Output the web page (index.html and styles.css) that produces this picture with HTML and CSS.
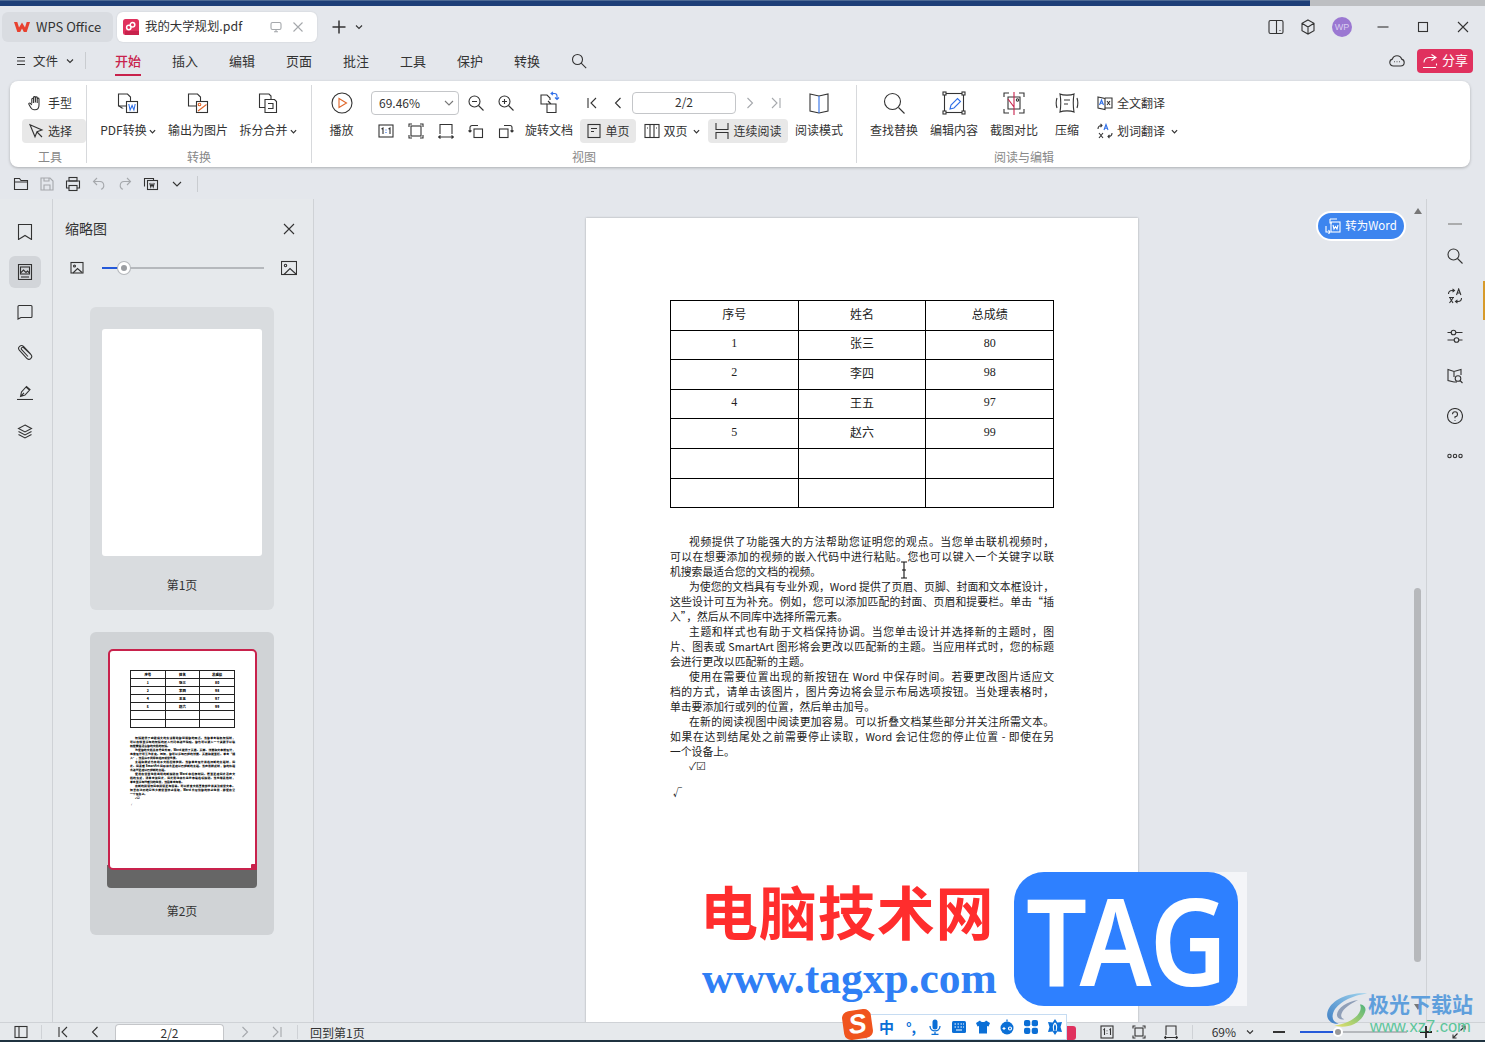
FILE: index.html
```html
<!DOCTYPE html>
<html lang="zh">
<head>
<meta charset="utf-8">
<title>我的大学规划.pdf</title>
<link rel="stylesheet" href="styles.css">
</head>
<body>
<div class="desk-strip"><div class="desk-blue"></div></div>

<header class="tabbar">
  <div class="tab tab-home">
    <svg class="ic16 logo-w" viewBox="0 0 16 16"><path d="M0 3h3.300l1.700 5.500L8 3.500l3 5L12.700 3H16l-3.300 10h-2.900L8 9.500 6.200 13H3.300z" fill="#e8412f" stroke="none"/></svg>
    <span>WPS Office</span>
  </div>
  <div class="tab tab-doc">
    <svg class="ic16" viewBox="0 0 16 16"><rect width="16" height="16" rx="2.500" fill="#e0315e" stroke="none"/><rect x="2" y="12" width="14" height="4" fill="#c8224c" stroke="none"/><circle cx="9.500" cy="5.800" r="2.300" fill="none" stroke="#fff" stroke-width="1.500"/><circle cx="5.800" cy="8.500" r="2.200" fill="none" stroke="#fff" stroke-width="1.500"/></svg>
    <span class="tab-title">我的大学规划.pdf</span>
    <svg class="ic12 gray" viewBox="0 0 12 12"><rect x="1" y="1.500" width="10" height="7" rx="1.500"/><path d="M4 10.800h4M6 8.500v2.300"/></svg>
    <svg class="ic12 gray" viewBox="0 0 12 12"><path d="M1.500 1.500l9 9M10.500 1.500l-9 9"/></svg>
  </div>
  <div class="tab-add">
    <svg class="ic16 dark" viewBox="0 0 16 16"><path d="M1.500 8h13M8 1.500v13" stroke-width="1.500"/></svg>
    <svg class="chev" viewBox="0 0 8 8"><path d="M1 2.500l3 3 3-3"/></svg>
  </div>
  <div class="win-tools">
    <svg class="ic16" viewBox="0 0 16 16"><rect x="1" y="1.500" width="14" height="13" rx="1.500"/><path d="M8.500 1.500v13M11.500 11.500h1"/></svg>
    <svg class="ic16" viewBox="0 0 16 16"><path d="M8 1l6 3.300v7.400L8 15l-6-3.300V4.300zM2 4.300L8 8l6-3.700M8 8v7"/></svg>
    <div class="avatar">WP</div>
    <div class="win-btns">
      <svg class="ic12" viewBox="0 0 12 12"><path d="M0.500 6h11"/></svg>
      <svg class="ic12" viewBox="0 0 12 12"><rect x="1.500" y="1.500" width="9" height="9"/></svg>
      <svg class="ic12" viewBox="0 0 12 12"><path d="M1 1l10 10M11 1L1 11"/></svg>
    </div>
  </div>
</header>

<nav class="menubar">
  <div class="file-menu">
    <svg class="ic12" viewBox="0 0 12 12"><path d="M2 2.500h8M2 6h8M2 9.500h8"/></svg>
    <span>文件</span>
    <svg class="chev" viewBox="0 0 8 8"><path d="M1 2.500l3 3 3-3"/></svg>
  </div>
  <div class="menu-sep"></div>
  <ul class="menu-list">
    <li class="on">开始</li><li>插入</li><li>编辑</li><li>页面</li><li>批注</li><li>工具</li><li>保护</li><li>转换</li>
  </ul>
  <svg class="ic16 menu-search" viewBox="0 0 16 16"><circle cx="6.500" cy="6.500" r="5"/><path d="M10.200 10.200l5 5"/></svg>
  <div class="menu-right">
    <svg class="ic16" viewBox="0 0 16 16"><path d="M4.500 13C2.300 13 .8 11.500.8 9.500c0-1.700 1-3 2.600-3.400C4 4 5.800 2.800 8 2.800s4 1.200 4.600 3.300c1.600.4 2.600 1.700 2.600 3.400 0 2-1.500 3.500-3.700 3.500z"/><path d="M5 8.800h.8M7.600 8.800h.8M10.200 8.800h.8"/></svg>
    <div class="share">
      <svg class="ic16 white" viewBox="0 0 16 16"><path d="M9.500 1.500l4.500 3-4.500 3M14 4.500H7C4 4.500 2 6.500 2 9.500M1 14.500h13M14.500 10.500v2"/></svg>
      <span>分享</span>
    </div>
  </div>
</nav>

<section class="ribbon">
  <div class="group g-tool">
    <div class="group-body col">
      <div class="row-btn"><svg class="ic16" viewBox="0 0 16 16"><path d="M3.800 8.500V4.200a.9.900 0 0 1 1.800 0V8M5.600 7.500V2.500a.9.900 0 0 1 1.800 0V7.500M7.400 7.500V2.800a.9.900 0 0 1 1.800 0V8M9.200 8V4a.9.900 0 0 1 1.800 0v6c0 3-1.700 4.800-4 4.800H6c-1.500 0-2.500-.7-3.300-2.200L.9 9.300c-.5-1 .8-1.800 1.500-1L3.800 10"/></svg><span>手型</span></div>
      <div class="row-btn sel"><svg class="ic16" viewBox="0 0 16 16"><path d="M2 1.800l12 5.200-5 1.800-2 5z"/><path d="M9 9l5 5"/></svg><span>选择</span></div>
    </div>
    <div class="group-label">工具</div>
  </div>

  <div class="group g-convert">
    <div class="group-body">
      <div class="big w70"><svg class="ic24" viewBox="0 0 24 24"><path d="M11 15H2.500V3h9l3 3v4"/><path d="M3 15l3 2-1 0"/><rect x="10.500" y="10.500" width="11" height="11" fill="#fff"/><path d="M12.800 13l1.300 6 2-4.500 1.800 4.500 1.300-6" stroke="#2f6fe8"/></svg><span class="lbl">PDF转换<svg class="chev-s" viewBox="0 0 8 8"><path d="M1 2.500l3 3 3-3"/></svg></span></div>
      <div class="big w70"><svg class="ic24" viewBox="0 0 24 24"><path d="M11 15H2.500V3h9l3 3v4"/><rect x="10.500" y="10.500" width="11" height="11" fill="#fff"/><circle cx="13.500" cy="13.500" r="1.300" stroke="#e0662a"/><path d="M12 20l8.500-6.500" stroke="#e0662a"/></svg><span class="lbl">输出为图片</span></div>
      <div class="big w70"><svg class="ic24" viewBox="0 0 24 24"><path d="M9 16.500H3.500V3H13l2 2v3"/><path d="M9 8.500h9.500l2 2v11H9zM12 12.500h5v5h-5"/></svg><span class="lbl">拆分合并<svg class="chev-s" viewBox="0 0 8 8"><path d="M1 2.500l3 3 3-3"/></svg></span></div>
    </div>
    <div class="group-label">转换</div>
  </div>

  <div class="group g-view">
    <div class="group-body">
      <div class="big w59"><svg class="ic24" viewBox="0 0 24 24"><circle cx="12" cy="12" r="10"/><path d="M9 7.500l7.500 4.500L9 16.500z" stroke="#e0662a"/></svg><span class="lbl">播放</span></div>
      <div class="col w150">
        <div class="row">
          <div class="combo"><span>69.46%</span><svg class="chev-m" viewBox="0 0 10 10"><path d="M1 3l4 4 4-4"/></svg></div>
          <svg class="ic16 mi9" viewBox="0 0 16 16"><circle cx="6.500" cy="6.500" r="5.500"/><path d="M10.500 10.500l5 5M4 6.500h5"/></svg>
          <svg class="ic16 mi14" viewBox="0 0 16 16"><circle cx="6.500" cy="6.500" r="5.500"/><path d="M10.500 10.500l5 5M4 6.500h5M6.500 4v5"/></svg>
        </div>
        <div class="row icons30">
          <svg class="ic16" viewBox="0 0 16 16"><rect x="1" y="2" width="14" height="12"/><path d="M3.500 6l1.500-1v6M10.500 6l1.500-1v6"/><path d="M8 6.500v1M8 9v1" stroke="#2f6fe8"/></svg>
          <svg class="ic16" viewBox="0 0 16 16"><rect x="3" y="3" width="10" height="10"/><path d="M1 4V1h3M12 1h3v3M15 12v3h-3M4 15H1v-3"/></svg>
          <svg class="ic16" viewBox="0 0 16 16"><path d="M2 11V1.500h12V11M.5 14h15M2.500 12.500L.5 14l2 1.500M13.500 12.500l2 1.500-2 1.500"/></svg>
          <svg class="ic16" viewBox="0 0 16 16"><rect x="6" y="6" width="8.500" height="8.500"/><path d="M2 9V4.500a2 2 0 0 1 2-2h6M.5 7.500L2 9l1.500-1.500"/></svg>
          <svg class="ic16" viewBox="0 0 16 16"><rect x="1.500" y="6" width="8.500" height="8.500"/><path d="M14 9V4.500a2 2 0 0 0-2-2H6M15.500 7.500L14 9l-1.500-1.500"/></svg>
        </div>
      </div>
      <div class="big w56"><svg class="ic24" viewBox="0 0 24 24"><path d="M10 13H4V4h6l3 3v2"/><path d="M10 13h9v8.500H10zM11 10l3 3"/><path d="M14 2.500h3.500a2.500 2.500 0 0 1 2.500 2.500v3M18 6.500l2 2 2-2M16 .8l-2 1.700 2 1.700" stroke="#2f6fe8"/></svg><span class="lbl">旋转文档</span></div>
      <div class="col w215">
        <div class="row nav-row">
          <svg class="ic12 mi9" viewBox="0 0 12 12"><path d="M2 1v10M10 1L5 6l5 5"/></svg>
          <svg class="ic12 mi14" viewBox="0 0 12 12"><path d="M8.500 1L3.500 6l5 5"/></svg>
          <div class="page-input">2/2</div>
          <svg class="ic12 gray mi8" viewBox="0 0 12 12"><path d="M3.500 1l5 5-5 5"/></svg>
          <svg class="ic12 gray mi14" viewBox="0 0 12 12"><path d="M10 1v10M2 1l5 5-5 5"/></svg>
        </div>
        <div class="row view-row">
          <div class="mode sel w56"><svg class="ic16" viewBox="0 0 16 16"><rect x="2" y="1.500" width="12" height="13"/><path d="M5 5.500h6M5 8.500h3"/></svg><span>单页</span></div>
          <div class="mode w56"><svg class="ic16" viewBox="0 0 16 16"><rect x="1" y="1.500" width="14" height="13"/><path d="M6 1.500v13M10 1.500v13M3 5h1M12 5h1"/></svg><span>双页</span><svg class="chev-s" viewBox="0 0 8 8"><path d="M1 2.500l3 3 3-3"/></svg></div>
          <div class="mode sel w80"><svg class="ic16" viewBox="0 0 16 16"><path d="M2 0v6.500h12V0M2 16V9.500h12V16"/></svg><span>连续阅读</span></div>
        </div>
      </div>
      <div class="big w54"><svg class="ic24" viewBox="0 0 24 24"><path d="M3 3l9 2 9-2v17l-9 2-9-2z"/><path d="M12 5v17" stroke="#2f6fe8"/></svg><span class="lbl">阅读模式</span></div>
    </div>
    <div class="group-label">视图</div>
  </div>

  <div class="group g-read">
    <div class="group-body">
      <div class="big w60"><svg class="ic24" viewBox="0 0 24 24"><circle cx="10.500" cy="10.500" r="8"/><path d="M16.500 16.500l6 6"/></svg><span class="lbl">查找替换</span></div>
      <div class="big w60"><svg class="ic24" viewBox="0 0 24 24"><rect x="2.500" y="2.500" width="19" height="19"/><rect x="1" y="1" width="3" height="3" fill="#fff"/><rect x="20" y="1" width="3" height="3" fill="#fff"/><rect x="1" y="20" width="3" height="3" fill="#fff"/><rect x="20" y="20" width="3" height="3" fill="#fff"/><path d="M8 18l1-4 6.500-6.500 3 3L12 17z" stroke="#2f6fe8"/></svg><span class="lbl">编辑内容</span></div>
      <div class="big w60"><svg class="ic24" viewBox="0 0 24 24"><path d="M2 6V2h5M22 6V2h-5M2 18v4h5M22 18v4h-5"/><path d="M6 6h12v12H6z"/><path d="M12 1v23M6 8l6 8" stroke="#c8224c"/><circle cx="15.500" cy="9" r="1.200"/></svg><span class="lbl">截图对比</span></div>
      <div class="big w46"><svg class="ic24" viewBox="0 0 24 24"><path d="M5 3c3 1.500 11 1.500 14 0-1 6-1 12 0 18-3-1.500-11-1.500-14 0 1-6 1-12 0-18zM9 9h6M9 13h4M2 7c-1 3-1 7 0 10M22 7c1 3 1 7 0 10"/></svg><span class="lbl">压缩</span></div>
      <div class="col trans">
        <div class="row-btn"><svg class="ic16" viewBox="0 0 16 16"><path d="M1 2l7 1.500v11L1 13z"/><path d="M8 3h7v10H8"/><path d="M2.500 10l2-5 2 5M3.300 8.300h2.400" stroke="#2f6fe8"/><path d="M10 6l3 4M13 6l-3 4"/></svg><span>全文翻译</span></div>
        <div class="row-btn"><svg class="ic16" viewBox="0 0 16 16"><path d="M1 6c0-2 1.500-3.500 3.500-3.500M3.500.8l1.500 1.700-1.500 1.700M15 10c0 2-1.500 3.500-3.500 3.500M12.500 11.800L11 13.500l1.500 1.700"/><path d="M7 7l2-5.500L11 7M7.800 5.200h2.400" stroke="#2f6fe8"/><path d="M2 10l4 5M6 10l-4 5"/></svg><span>划词翻译</span><svg class="chev-s" viewBox="0 0 8 8"><path d="M1 2.500l3 3 3-3"/></svg></div>
      </div>
    </div>
    <div class="group-label shift">阅读与编辑</div>
  </div>
</section>

<div class="quickbar">
  <svg class="ic16" viewBox="0 0 16 16"><path d="M1.500 13.500V2.500h5l1.500 2h6.500v9zM1.500 6h13"/></svg>
  <svg class="ic16 gray" viewBox="0 0 16 16"><path d="M2 2h9l3 3v9H2zM5 2v3h5V2M5 14V9h6v5"/></svg>
  <svg class="ic16" viewBox="0 0 16 16"><rect x="4" y="1.500" width="8" height="3.500"/><path d="M4 12H1.500V5h13v7H12"/><rect x="4" y="9.500" width="8" height="5"/></svg>
  <svg class="ic16 gray" viewBox="0 0 16 16"><path d="M6 2L2.500 5.500 6 9M3 5.500h6a4 4 0 0 1 1 7.800"/></svg>
  <svg class="ic16 gray" viewBox="0 0 16 16"><path d="M10 2l3.500 3.500L10 9M13 5.500H7a4 4 0 0 0-1 7.800"/></svg>
  <svg class="ic16" viewBox="0 0 16 16"><path d="M1.500 10.500v-8h9v2"/><rect x="4.500" y="4.500" width="10" height="9"/><path d="M6.800 7l1 4 1.200-3 1.200 3 1-4"/></svg>
  <svg class="chev-l" viewBox="0 0 10 10"><path d="M1 3l4 4 4-4"/></svg>
  <div class="quick-sep"></div>
</div>

<main class="main">
  <aside class="rail">
    <div class="rail-btn"><svg class="ic16" viewBox="0 0 16 16"><path d="M1.500 0.500h13v15L8 11.500l-6.500 4z"/></svg></div>
    <div class="rail-btn sel"><svg class="ic16" viewBox="0 0 16 16"><rect x="1.500" y="0.500" width="13" height="15"/><rect x="3.500" y="3" width="9" height="7"/><path d="M3.500 9l3-3 2.500 2.500 1.500-1.500 2 2"/><path d="M4 13h8"/></svg></div>
    <div class="rail-btn"><svg class="ic16" viewBox="0 0 16 16"><path d="M1 2.500a1 1 0 0 1 1-1h12a1 1 0 0 1 1 1v10a1 1 0 0 1-1 1H4L1 15z"/></svg></div>
    <div class="rail-btn"><svg class="ic16" viewBox="0 0 16 16"><path d="M13.500 10L6.500 2.500a2.800 2.800 0 0 0-4.200 3.700l7.500 8.200a2.800 2.800 0 0 0 4.200-3.700L6.800 3.800a1.400 1.400 0 0 0-2.100 1.900L11 12.500"/></svg></div>
    <div class="rail-btn"><svg class="ic16" viewBox="0 0 16 16"><path d="M0 15.500h16"/><path d="M3.500 12.500l1-4.500 5-5.500 3.500 3-5 5.500zM9 3l3.500 3M3.500 12.500L7 8.800"/></svg></div>
    <div class="rail-btn"><svg class="ic16" viewBox="0 0 16 16"><path d="M8 1l6.500 3.500L8 8 1.500 4.500zM1.500 7.500L8 11l6.500-3.500M1.500 10.500L8 14l6.500-3.500"/></svg></div>
  </aside>

  <aside class="panel">
    <div class="panel-head"><span>缩略图</span><svg class="ic12" viewBox="0 0 12 12"><path d="M1 1l10 10M11 1L1 11"/></svg></div>
    <div class="zoom-row">
      <svg class="ic14" viewBox="0 0 14 14"><rect x="1" y="1.500" width="12" height="10.500"/><circle cx="4.500" cy="5" r="1"/><path d="M3 12l4.500-4.500 4.500 4"/></svg>
      <div class="slider"><div class="slider-on"></div><div class="slider-knob"></div><div class="slider-off"></div></div>
      <svg class="ic16" viewBox="0 0 16 16"><rect x="0.500" y="1.500" width="15" height="13"/><circle cx="4.500" cy="5.500" r="1.200"/><path d="M3 14.500l6-6 6 5.500"/></svg>
    </div>
    <div class="thumb">
      <div class="thumb-blank"></div>
      <div class="thumb-name">第1页</div>
    </div>
    <div class="thumb active">
      <div class="mini">
        <div class="mini-page">
          <table class="mini-table">
            <tr><td>序号</td><td>姓名</td><td>总成绩</td></tr>
            <tr><td>1</td><td>张三</td><td>80</td></tr>
            <tr><td>2</td><td>李四</td><td>98</td></tr>
            <tr><td>4</td><td>王五</td><td>97</td></tr>
            <tr><td>5</td><td>赵六</td><td>99</td></tr>
            <tr><td></td><td></td><td></td></tr>
            <tr><td></td><td></td><td></td></tr>
          </table>
          <div class="mini-text">
            <p class="ln in">视频提供了功能强大的方法帮助您证明您的观点。当您单击联机视频时，</p>
            <p class="ln">可以在想要添加的视频的嵌入代码中进行粘贴。您也可以键入一个关键字以联</p>
            <p class="ln end">机搜索最适合您的文档的视频。</p>
            <p class="ln in">为使您的文档具有专业外观，Word 提供了页眉、页脚、封面和文本框设计，</p>
            <p class="ln">这些设计可互为补充。例如，您可以添加匹配的封面、页眉和提要栏。单击“插</p>
            <p class="ln end">入”，然后从不同库中选择所需元素。</p>
            <p class="ln in">主题和样式也有助于文档保持协调。当您单击设计并选择新的主题时，图</p>
            <p class="ln">片、图表或 SmartArt 图形将会更改以匹配新的主题。当应用样式时，您的标题</p>
            <p class="ln end">会进行更改以匹配新的主题。</p>
            <p class="ln in">使用在需要位置出现的新按钮在 Word 中保存时间。若要更改图片适应文</p>
            <p class="ln">档的方式，请单击该图片，图片旁边将会显示布局选项按钮。当处理表格时，</p>
            <p class="ln end">单击要添加行或列的位置，然后单击加号。</p>
            <p class="ln in">在新的阅读视图中阅读更加容易。可以折叠文档某些部分并关注所需文本。</p>
            <p class="ln">如果在达到结尾处之前需要停止读取，Word 会记住您的停止位置 - 即使在另</p>
            <p class="ln end">一个设备上。</p>
            <p class="ln end in">✓☑</p>
            <p class="ln end mini-v">√</p>
          </div>
          <div class="mini-corner"></div>
        </div>
        <div class="mini-shadow"></div>
      </div>
      <div class="thumb-name">第2页</div>
    </div>
  </aside>

  <section class="doc">
    <div class="doc-view">
      <article class="page">
        <table class="score">
          <tr><td>序号</td><td>姓名</td><td>总成绩</td></tr>
          <tr><td>1</td><td>张三</td><td>80</td></tr>
          <tr><td>2</td><td>李四</td><td>98</td></tr>
          <tr><td>4</td><td>王五</td><td>97</td></tr>
          <tr><td>5</td><td>赵六</td><td>99</td></tr>
          <tr><td></td><td></td><td></td></tr>
          <tr><td></td><td></td><td></td></tr>
        </table>
        <div class="body-text">
          <p class="ln in">视频提供了功能强大的方法帮助您证明您的观点。当您单击联机视频时，</p>
          <p class="ln">可以在想要添加的视频的嵌入代码中进行粘贴。您也可以键入一个关键字以联</p>
          <p class="ln end">机搜索最适合您的文档的视频。</p>
          <p class="ln in">为使您的文档具有专业外观，Word 提供了页眉、页脚、封面和文本框设计，</p>
          <p class="ln">这些设计可互为补充。例如，您可以添加匹配的封面、页眉和提要栏。单击“插</p>
          <p class="ln end">入”，然后从不同库中选择所需元素。</p>
          <p class="ln in">主题和样式也有助于文档保持协调。当您单击设计并选择新的主题时，图</p>
          <p class="ln">片、图表或 SmartArt 图形将会更改以匹配新的主题。当应用样式时，您的标题</p>
          <p class="ln end">会进行更改以匹配新的主题。</p>
          <p class="ln in">使用在需要位置出现的新按钮在 Word 中保存时间。若要更改图片适应文</p>
          <p class="ln">档的方式，请单击该图片，图片旁边将会显示布局选项按钮。当处理表格时，</p>
          <p class="ln end">单击要添加行或列的位置，然后单击加号。</p>
          <p class="ln in">在新的阅读视图中阅读更加容易。可以折叠文档某些部分并关注所需文本。</p>
          <p class="ln">如果在达到结尾处之前需要停止读取，Word 会记住您的停止位置 - 即使在另</p>
          <p class="ln end">一个设备上。</p>
          <p class="ln end in checks">✓☑</p>
          <p class="ln end root">√</p>
        </div>
        <svg class="ibeam" viewBox="0 0 8 18"><path d="M1 1h6M4 1v16M1 17h6M2 9h4"/></svg>
      </article>
    </div>
    <div class="scroll">
      <svg class="scroll-up" viewBox="0 0 8 6"><path d="M4 0l4 6H0z"/></svg>
      <div class="scroll-thumb"></div>
      <svg class="scroll-down" viewBox="0 0 8 6"><path d="M0 0h8L4 6z"/></svg>
    </div>
    <div class="to-word">
      <svg class="ic16 white" viewBox="0 0 16 16"><path d="M5 1h7M5 1v4h2"/><rect x="6" y="4" width="9" height="10"/><path d="M8 7l1 4 1.500-2.500L12 11l1-4"/><path d="M1 8v6h4M3.500 12L5 14l-1.500 2"/></svg>
      <span>转为Word</span>
    </div>
  </section>

  <aside class="side-tools">
    <div class="side-btn"><svg class="ic16 gray2" viewBox="0 0 16 16"><path d="M1 8h14" stroke-width="1.500"/></svg></div>
    <div class="side-btn"><svg class="ic16" viewBox="0 0 16 16"><circle cx="6.500" cy="6.500" r="5.500"/><path d="M10.500 10.500l5 5"/></svg></div>
    <div class="side-btn"><svg class="ic16" viewBox="0 0 16 16"><path d="M1.500 6c0-2 1.500-3.500 3.500-3.500h2M5.500.8L7.500 2.500 5.500 4.200M14.500 10c0 2-1.500 3.500-3.500 3.500H9M10.500 11.800L8.500 13.500l2 1.700"/><path d="M9.500 7l2.200-6 2.200 6M10.300 5h2.800"/><path d="M2 9.500h5M2.500 15l3.500-5M6 15l-3-5"/></svg></div>
    <div class="side-btn"><svg class="ic16" viewBox="0 0 16 16"><path d="M0.500 4.500h4M9 4.500h6.500M7 12h-6.500M11.500 12h4"/><circle cx="6.500" cy="4.500" r="2.300"/><circle cx="9.500" cy="12" r="2.300"/></svg></div>
    <div class="side-btn"><svg class="ic16" viewBox="0 0 16 16"><path d="M7 14L1 12.500V1.500L7 3.500l7-2v5.500M7 3.500V9"/><circle cx="11" cy="10.500" r="2.800"/><path d="M13 12.500l2.500 2.500M7 14h3"/></svg></div>
    <div class="side-btn"><svg class="ic16" viewBox="0 0 16 16"><circle cx="8" cy="8" r="7.500"/><path d="M5.500 6.200A2.500 2.500 0 1 1 8 8.800v1.500M8 12v.8"/></svg></div>
    <div class="side-btn"><svg class="ic16" viewBox="0 0 16 16"><circle cx="2.500" cy="8" r="1.700"/><circle cx="8" cy="8" r="1.700"/><circle cx="13.500" cy="8" r="1.700"/></svg></div>
  </aside>
</main>

<footer class="status">
  <svg class="ic14 st-panel" viewBox="0 0 14 14"><rect x="1" y="1.500" width="12" height="11"/><path d="M5 1.500v11"/></svg>
  <div class="st-sep"></div>
  <svg class="ic12 st-first" viewBox="0 0 12 12"><path d="M2 1v10M10 1L5 6l5 5"/></svg>
  <svg class="ic12 st-prev" viewBox="0 0 12 12"><path d="M8.500 1L3.500 6l5 5"/></svg>
  <div class="st-input">2/2</div>
  <svg class="ic12 gray st-next" viewBox="0 0 12 12"><path d="M3.500 1l5 5-5 5"/></svg>
  <svg class="ic12 gray st-last" viewBox="0 0 12 12"><path d="M10 1v10M2 1l5 5-5 5"/></svg>
  <div class="st-sep st-sep2"></div>
  <span class="st-back">回到第1页</span>
  <div class="st-right">
    <svg class="ic14" viewBox="0 0 14 14"><rect x="1" y="1" width="12" height="12"/><path d="M3.500 5l1-1v6M9.500 5l1-1v6M7 5.500v.8M7 8v.8"/></svg>
    <svg class="ic14" viewBox="0 0 14 14"><rect x="3" y="3" width="8" height="8"/><path d="M1 3.500V1h2.500M10.500 1H13v2.500M13 10.500V13h-2.500M3.500 13H1v-2.500"/></svg>
    <svg class="ic14 st-fit" viewBox="0 0 14 14"><path d="M2 10V1h10v9M.5 12.500h13M2 11l-1.500 1.500L2 14M12 11l1.500 1.500L12 14"/></svg>
    <div class="st-sep st-sep3"></div>
    <span class="st-pct">69%</span>
    <svg class="chev st-chev" viewBox="0 0 8 8"><path d="M1 2.500l3 3 3-3"/></svg>
    <div class="st-minus"></div>
    <div class="st-slider"><div class="st-on"></div><div class="st-knob"></div></div>
    <svg class="ic12 st-plus" viewBox="0 0 12 12"><path d="M0 6h12M6 0v12" stroke-width="1.800"/></svg>
    <svg class="ic14 st-expand" viewBox="0 0 14 14"><path d="M8.500 5.500L13 1M9.500 1H13v3.500M5.500 8.500L1 13M4.500 13H1V9.500"/></svg>
  </div>
</footer>
<div class="taskbar"></div>

<div class="edge-mark"></div>

<div class="wm">
  <div class="wm-left">
    <div class="wm-cn">电脑技术网</div>
    <div class="wm-url">www.tagxp.com</div>
  </div>
  <div class="wm-tag"><div class="wm-badge"><span>TAG</span></div></div>
</div>

<div class="xz">
  <svg class="xz-swirl" viewBox="0 0 48 42">
    <defs>
      <linearGradient id="xzBlue" x1="1" y1="0" x2="0" y2="1"><stop offset="0" stop-color="#9fd4ee"/><stop offset="1" stop-color="#3f7fc4"/></linearGradient>
      <linearGradient id="xzGreen" x1="0" y1="1" x2="1" y2="0"><stop offset="0" stop-color="#e8e26a"/><stop offset="1" stop-color="#4fb37a"/></linearGradient>
    </defs>
    <path d="M46 3C30 1 8 8 3 22c-3 9 4 15 12 14-6-2-8-6-6-12C13 13 30 5 46 3z" fill="url(#xzBlue)"/>
    <path d="M36 10C24 12 14 18 13 26c0 4 4 6 8 5-3-1-4-3-3-6 2-6 10-11 18-15z" fill="#8f9fb8"/>
    <path d="M10 38c14 4 30-2 34-16 1-4-2-7-6-7 4 6-4 20-28 23z" fill="url(#xzGreen)"/>
  </svg>
  <div class="xz-text">
    <div class="xz-cn">极光下载站</div>
    <div class="xz-url">www.xz7.com</div>
  </div>
</div>

<div class="ime">
  <div class="ime-s">S</div>
  <div class="ime-bar">
    <span class="ime-cn">中</span>
    <span class="ime-punct">°,</span>
    <svg class="ime-ic" viewBox="0 0 16 16"><rect x="5.500" y="0.500" width="5" height="10" rx="2.500" fill="#0b6fd6"/><path d="M3 7c0 6.500 10 6.500 10 0M8 13v2.500M4.500 15.500h7" fill="none" stroke="#0b6fd6" stroke-width="1.300"/></svg>
    <svg class="ime-ic" viewBox="0 0 16 16"><rect x="1" y="2" width="14" height="12" rx="1.500" fill="#0b6fd6"/><path d="M3.500 5h1.500M6.500 5H8M9.500 5H11M12 5h1M3.500 8h1.500M6.500 8H8M9.500 8H11M12 8h1M5 11h6" stroke="#fff" stroke-width="1.200"/></svg>
    <svg class="ime-ic" viewBox="0 0 16 16"><path d="M5 1.500L1 4l1.500 3.500L4 7v7.500h8V7l1.500.5L15 4l-4-2.500C10 3.500 6 3.500 5 1.500z" fill="#0b6fd6"/></svg>
    <svg class="ime-ic" viewBox="0 0 16 16"><circle cx="8" cy="9" r="6.500" fill="#0b6fd6"/><path d="M8 2.500V.5" stroke="#0b6fd6" stroke-width="1.300"/><path d="M3.500 9.500h3M5 8v3" stroke="#fff" stroke-width="1.100"/><circle cx="11" cy="9.500" r="1.500" fill="none" stroke="#fff" stroke-width="1.100"/></svg>
    <svg class="ime-ic" viewBox="0 0 16 16"><rect x="1" y="1" width="6.300" height="6.300" rx="2" fill="#0b6fd6"/><rect x="8.700" y="1" width="6.300" height="6.300" rx="2" fill="#0b6fd6"/><rect x="1" y="8.700" width="6.300" height="6.300" rx="2" fill="#0b6fd6"/><rect x="8.700" y="8.700" width="6.300" height="6.300" rx="2" fill="#0b6fd6"/></svg>
    <svg class="ime-ic" viewBox="0 0 16 16"><path d="M8 0l2.300 3.500L15 3l-1.500 5L15 13l-4.700-.5L8 16l-2.300-3.500L1 13l1.500-5L1 3l4.700.5z" fill="#0b6fd6"/><path d="M8 4c-2 2-2 5-1 8M8 4c2 2 2 5 1 8" fill="none" stroke="#fff"/></svg>
  </div>
  <div class="ime-red"></div>
</div>
</body>
</html>
```
FILE: styles.css
```css
* { box-sizing: border-box; }
html, body { margin: 0; padding: 0; }
body {
  width: 1485px; height: 1042px; overflow: hidden; position: relative;
  background: #e4e7ec; color: #333;
  font-family: "Noto Sans CJK SC", "Noto Sans", sans-serif; font-size: 12px;
  display: flex; flex-direction: column;
}
svg { display: block; flex: none; fill: none; stroke: currentColor; stroke-width: 1.1; }
.ic12 { width: 12px; height: 12px; }
.ic14 { width: 14px; height: 14px; }
.ic16 { width: 16px; height: 16px; }
.ic24 { width: 24px; height: 24px; }
.gray { color: #a5a8ac; }
.gray2 { color: #999; }
.dark { color: #333; }
.white { color: #fff; }
.chev { width: 8px; height: 8px; }
.chev-s { display: inline-block; width: 7px; height: 7px; margin-left: 2px; vertical-align: 0; stroke-width: 1.4; }
.chev-m { width: 10px; height: 10px; color: #777; }
.chev-l { width: 10px; height: 10px; }

.desk-strip { height: 6px; flex: none; background: #bdbfc2; }
.desk-blue { width: 1310px; height: 6px; background: #1d3f78; border-top: 1px solid #4d6a94; }

/* title bar */
.tabbar { height: 38px; flex: none; display: flex; align-items: center; padding: 6px 16px 2px 2px; }
.tab { height: 30px; border-radius: 6px; display: flex; align-items: center; font-size: 13px; }
.tab > span { margin-bottom: 2px; }
.tab-home { width: 111px; background: #d9dce1; padding-left: 12px; gap: 6px; }
.tab-doc { width: 200px; margin-left: 4px; background: #fff; padding-left: 6px; box-shadow: 0 0 2px rgba(0,0,0,.12); }
.tab-title { margin-left: 6px; width: 125px; font-size: 12.4px; }
.tab-doc .ic12:last-child { margin-left: 10px; }
.tab-add { display: flex; align-items: center; margin-left: 14px; gap: 8px; }
.win-tools { margin-left: auto; display: flex; align-items: center; gap: 16px; }
.avatar { width: 20px; height: 20px; border-radius: 50%; background: #9b78d2; color: #d9cdf0; font: 9px/20px "Liberation Sans", sans-serif; text-align: center; }
.win-btns { display: flex; gap: 28px; margin-left: 9px; }

/* menu */
.menubar { height: 37px; flex: none; display: flex; align-items: center; padding: 0 12px 4px 15px; font-size: 13px; }
.file-menu { display: flex; align-items: center; gap: 6px; width: 62px; font-size: 12.5px; }
.file-menu .chev { margin-left: 2px; }
.menu-sep { width: 1px; height: 17px; background: #c9ccd0; margin-left: 8px; }
.menu-list { list-style: none; margin: 0 0 0 29px; padding: 0; display: flex; gap: 31px; }
.menu-list li { width: 26px; position: relative; white-space: nowrap; line-height: 20px; }
.menu-list li.on { color: #c8224c; font-weight: 500; }
.menu-list li.on::after { content: ""; position: absolute; left: 0; right: 0; bottom: -5px; height: 2px; background: #c8224c; }
.menu-search { margin-left: 31px; }
.menu-right { margin-left: auto; display: flex; align-items: center; gap: 12px; }
.share { width: 56px; height: 24px; border-radius: 4px; background: #e0315e; color: #fff; display: flex; align-items: center; justify-content: center; gap: 4px; }
.share span { margin-bottom: 2px; }

/* ribbon */
.ribbon { height: 86px; flex: none; margin: 0 15px 0 10px; background: #fff; border-radius: 8px; box-shadow: 0 1px 3px rgba(0,0,0,.25); display: flex; }
.group { display: flex; flex-direction: column; padding-top: 10px; position: relative; }
.group + .group::before { content: ""; position: absolute; left: -1px; top: 4px; bottom: 4px; width: 1px; background: #d7d9dc; }
.g-tool { width: 76px; padding-left: 12px; }
.g-convert { width: 224px; margin-left: 1px; padding-left: 6px; }
.g-view { width: 544px; margin-left: 1px; }
.g-read { flex: 1; margin-left: 1px; padding-left: 7px; }
.group-body { height: 52px; display: flex; }
.group-label { margin-top: 6px; height: 16px; line-height: 16px; color: #888; text-align: center; }
.g-tool .group-label { width: 56px; }
.g-convert .group-label { margin-left: -6px; }
.group-label.shift { width: 320px; }
.col { display: flex; flex-direction: column; gap: 4px; }
.row { display: flex; align-items: center; height: 24px; }
.big { display: flex; flex-direction: column; align-items: center; flex: none; }
.lbl { margin-top: 7px; height: 16px; line-height: 16px; white-space: nowrap; }
.w46 { width: 46px; } .w54 { width: 54px; } .w56 { width: 56px; } .w59 { width: 59px; }
.w60 { width: 60px; } .w70 { width: 70px; } .w80 { width: 80px; }
.w150 { width: 150px; flex: none; } .w215 { width: 215px; flex: none; }
.row-btn { height: 24px; display: flex; align-items: center; gap: 4px; padding: 0 5px 0 6px; border-radius: 4px; white-space: nowrap; }
.row-btn span, .mode span, .combo span { margin-bottom: 2px; }
.sel { background: #e8e8e8; }
.combo { width: 88px; height: 24px; border: 1px solid #c4c6c9; border-radius: 4px; display: flex; align-items: center; justify-content: space-between; padding: 0 4px 0 7px; }
.mi14 { margin-left: 14px; } .mi9 { margin-left: 9px; } .mi8 { margin-left: 8px; }
.icons30 { padding-left: 7px; gap: 14px; }
.nav-row .page-input { margin-left: 8px; }
.page-input { width: 104px; height: 22px; border: 1px solid #c4c6c9; border-radius: 4px; text-align: center; line-height: 18px; }
.view-row { padding-left: 3px; gap: 8px; }
.mode { height: 24px; display: flex; align-items: center; justify-content: center; gap: 3px; border-radius: 4px; white-space: nowrap; flex: none; }
.trans { margin-left: 1px; }
.trans .row-btn { padding-left: 6px; }

/* quick bar */
.quickbar { height: 32px; flex: none; display: flex; align-items: center; padding: 2px 0 0 13px; gap: 10px; }
.chev-l { margin-left: 3px; }
.quick-sep { width: 1px; height: 16px; background: #c9ccd0; margin-left: 5px; }

/* main */
.main { flex: 1; min-height: 0; display: flex; }
.rail { width: 53px; flex: none; border-right: 1px solid #cfd2d6; background: #e6e9ec; padding-top: 17px; display: flex; flex-direction: column; align-items: flex-start; padding-left: 9px; gap: 8px; }
.rail-btn { width: 32px; height: 32px; display: flex; align-items: center; justify-content: center; border-radius: 6px; }
.rail-btn.sel { background: #d2d5d9; }
.panel { width: 261px; flex: none; border-right: 1px solid #cfd2d6; background: #e6e9ec; overflow: hidden; }
.panel-head { height: 28px; margin-top: 16px; display: flex; align-items: center; justify-content: space-between; padding: 0 18px 0 12px; font-size: 14px; }
.panel-head span { margin-bottom: 2px; }
.zoom-row { display: flex; align-items: center; margin-top: 17px; height: 16px; padding-left: 17px; }
.slider { width: 162px; margin-left: 18px; display: flex; align-items: center; margin-right: 17px; }
.slider-on { width: 16px; height: 2px; background: #2459d9; }
.slider-knob { width: 12px; height: 12px; border-radius: 50%; background: #9b9ea2; border: 3px solid #fff; box-shadow: 0 0 0 1px #b5b8bc; flex: none; }
.slider-off { flex: 1; height: 2px; background: #b5b8bc; }
.thumb { margin: 31px 0 0 37px; width: 184px; height: 303px; border-radius: 6px; background: #d9dcdf; padding-top: 22px; }
.thumb.active { margin-top: 22px; background: #d0d3d6; padding-top: 17px; }
.thumb-blank { width: 160px; height: 227px; margin-left: 12px; background: #fff; border-radius: 3px; }
.thumb-name { text-align: center; line-height: 16px; margin-top: 21px; color: #333; }
.thumb.active .thumb-name { margin-top: 15px; }
.mini { margin-left: 17px; width: 150px; }
.mini-page { width: 149px; height: 221px; margin-left: 1px; position: relative; z-index: 1; background: #fff; border: 2px solid #c8224c; border-radius: 5px; padding: 19px 20px 0 20px; }
.mini-shadow { width: 150px; height: 23px; margin-top: -5px; background: #666; border-radius: 0 0 4px 4px; }
.mini-corner { position: absolute; right: -2px; bottom: -2px; width: 6px; height: 6px; background: #c8224c; border-radius: 1px; }
.mini-table { width: 105px; border-collapse: collapse; table-layout: fixed; margin: 0 0 8px 0; }
.mini-table td { border: 1px solid #222; height: 8.1px; padding: 0; font-size: 3.4px; line-height: 3px; text-align: center; color: #000; font-weight: 900; }
.mini-text { width: 105px; color: #000; font-size: 2.85px; line-height: 4px; font-weight: 900; }
.mini-text .ln.in { text-indent: 5px; }
.mini-text .mini-v { margin-top: 3px; font-size: 2px; padding-left: 1px; }

/* document */
.doc { flex: 1; min-width: 0; display: flex; position: relative; overflow: hidden; }
.doc-view { flex: 1; display: flex; justify-content: center; padding-top: 19px; min-width: 0; }
.page { width: 552px; height: 900px; flex: none; background: #fff; box-shadow: 0 0 2px rgba(0,0,0,.3); padding: 82px 84px 0; position: relative; }
.score { width: 384px; border-collapse: collapse; table-layout: fixed; color: #222; }
.score td { border: 1px solid #000; height: 29.6px; padding: 0 0 3px; text-align: center; font-family: "Liberation Serif", "Noto Sans CJK SC", serif; font-size: 12px; }
.body-text { margin-top: 26px; font-size: 10.8px; line-height: 15px; color: #222; }
.ln { margin: 0; text-align: justify; text-align-last: justify; white-space: nowrap; }
.ln.end { text-align-last: left; }
.ln.in { text-indent: 19px; }
.checks { line-height: 13px; }
.root { margin-top: 13px; padding-left: 3px; font-size: 9px; font-weight: 700; color: #000; }
.ibeam { position: absolute; left: 314px; top: 343px; width: 8px; height: 18px; color: #111; }
.scroll { width: 16px; flex: none; position: relative; padding-top: 9px; }
.scroll-up { width: 8px; height: 6px; margin: 0 0 0 4px; fill: #777; stroke: none; }
.scroll-thumb { width: 7px; height: 374px; margin: 374px 0 0 4px; border-radius: 4px; background: #b6b8bb; }
.scroll-down { width: 8px; height: 6px; margin: 42px 0 0 4px; fill: #777; stroke: none; }
.to-word { position: absolute; right: 20px; top: 12px; width: 90px; height: 30px; border-radius: 15px; background: #3d85ef; border: 2px solid #fff; color: #fff; display: flex; align-items: center; justify-content: center; gap: 4px; white-space: nowrap; font-size: 11.5px; }
.to-word span { margin-bottom: 2px; }
.side-tools { width: 59px; flex: none; border-left: 1px solid #cfd2d6; display: flex; flex-direction: column; align-items: center; padding: 9px 2px 0 0; }
.side-btn { height: 40px; width: 100%; display: flex; align-items: center; justify-content: center; }
.side-btn:first-child { height: 32px; margin-bottom: -4px; }

/* status */
.status { height: 18px; flex: none; border-top: 1px solid #cfd2d6; background: #e6e9ec; display: flex; align-items: center; position: relative; overflow: hidden; }
.st-panel { margin-left: 14px; }
.st-sep { width: 1px; height: 14px; background: #cfd2d6; margin-left: 13px; }
.st-first { margin-left: 15px; }
.st-prev { margin-left: 20px; }
.st-input { width: 109px; height: 18px; margin: 3px 0 0 14px; background: #fff; border: 1px solid #c4c6c9; border-bottom: 0; border-radius: 4px 4px 0 0; text-align: center; line-height: 16px; }
.st-next { margin-left: 15px; }
.st-last { margin-left: 20px; }
.st-sep2 { margin-left: 14px; }
.st-back { margin: 2px 0 0 12px; line-height: 16px; }
.st-right { margin-left: auto; display: flex; align-items: center; padding-right: 19px; }
.st-right > .ic14 { margin-right: 18px; }
.st-right > .st-fit { margin-right: 0; }
.st-sep3 { margin: 0 0 0 14px; }
.st-pct { margin-left: 19px; }
.st-chev { margin-left: 10px; }
.st-minus { width: 12px; height: 2px; background: #333; margin-left: 19px; }
.st-slider { width: 107px; height: 2px; background: #b5b8bc; margin-left: 15px; position: relative; }
.st-on { width: 38px; height: 2px; background: #2459d9; }
.st-knob { position: absolute; left: 33px; top: -4px; width: 10px; height: 10px; border-radius: 50%; background: #999; border: 2px solid #fff; }
.st-plus { margin-left: 13px; color: #222; }
.st-right > .st-expand { margin: 0 0 0 20px; }
.taskbar { height: 2px; flex: none; background: #1f3340; }

.edge-mark { position: absolute; right: 0; top: 281px; width: 2px; height: 39px; background: #d79a2a; }

/* watermark */
.wm { position: absolute; left: 702px; top: 872px; height: 134px; width: 545px; display: flex; }
.wm-left { width: 312px; flex: none; }
.wm-cn { font-weight: 700; font-size: 58px; line-height: 76px; height: 84px; margin-left: -2px; color: #ff2d2d; white-space: nowrap; letter-spacing: .9px; }
.wm-url { font-family: "Liberation Serif", serif; font-weight: 700; font-size: 43.5px; line-height: 44px; color: #2f7ff5; white-space: nowrap; }
.wm-tag { width: 233px; height: 134px; background: linear-gradient(90deg, #fff 124px, #f4f5f8 124px); }
.wm-badge { width: 224px; height: 134px; background: #2e80ff; border-radius: 30px; color: #fff; font: 600 122px/134px "Noto Sans", sans-serif; padding-left: 12px; white-space: nowrap; }
.wm-badge span { display: inline-block; transform: scaleX(.88); transform-origin: left center; }

/* xz7 */
.xz { position: absolute; left: 1325px; top: 990px; display: flex; }
.xz-swirl { width: 44px; height: 40px; stroke: none; }
.xz-text { margin-left: -1px; }
.xz-cn { font-size: 21px; line-height: 26px; font-weight: 700; color: #5f9fdc; white-space: nowrap; }
.xz-url { font: 16.5px/20px "Liberation Sans", sans-serif; color: #5cc59a; margin-left: 2px; white-space: nowrap; }

/* ime */
.ime { position: absolute; left: 842px; top: 1010px; width: 236px; height: 32px; }
.ime-s { position: absolute; left: 1px; top: 0; z-index: 1; width: 29px; height: 29px; border-radius: 7px; background: #f0541e; color: #fff; font: italic 700 27px/28px "Liberation Sans", sans-serif; text-align: center; transform: rotate(-8deg); }
.ime-bar { position: absolute; left: 24px; top: 4px; width: 201px; height: 26px; background: #fff; border: 1px solid #c6dcf2; display: flex; align-items: center; padding-left: 12px; gap: 8px; color: #0b6fd6; }
.ime-cn { width: 16px; font-size: 15px; font-weight: 700; line-height: 20px; }
.ime-punct { width: 16px; font-size: 14px; font-weight: 700; text-align: center; line-height: 20px; }
.ime-ic { width: 16px; height: 16px; stroke: none; }
.ime-red { position: absolute; left: 225px; top: 16px; width: 9px; height: 14px; background: #e0315e; border-radius: 0 3px 3px 0; }
```
